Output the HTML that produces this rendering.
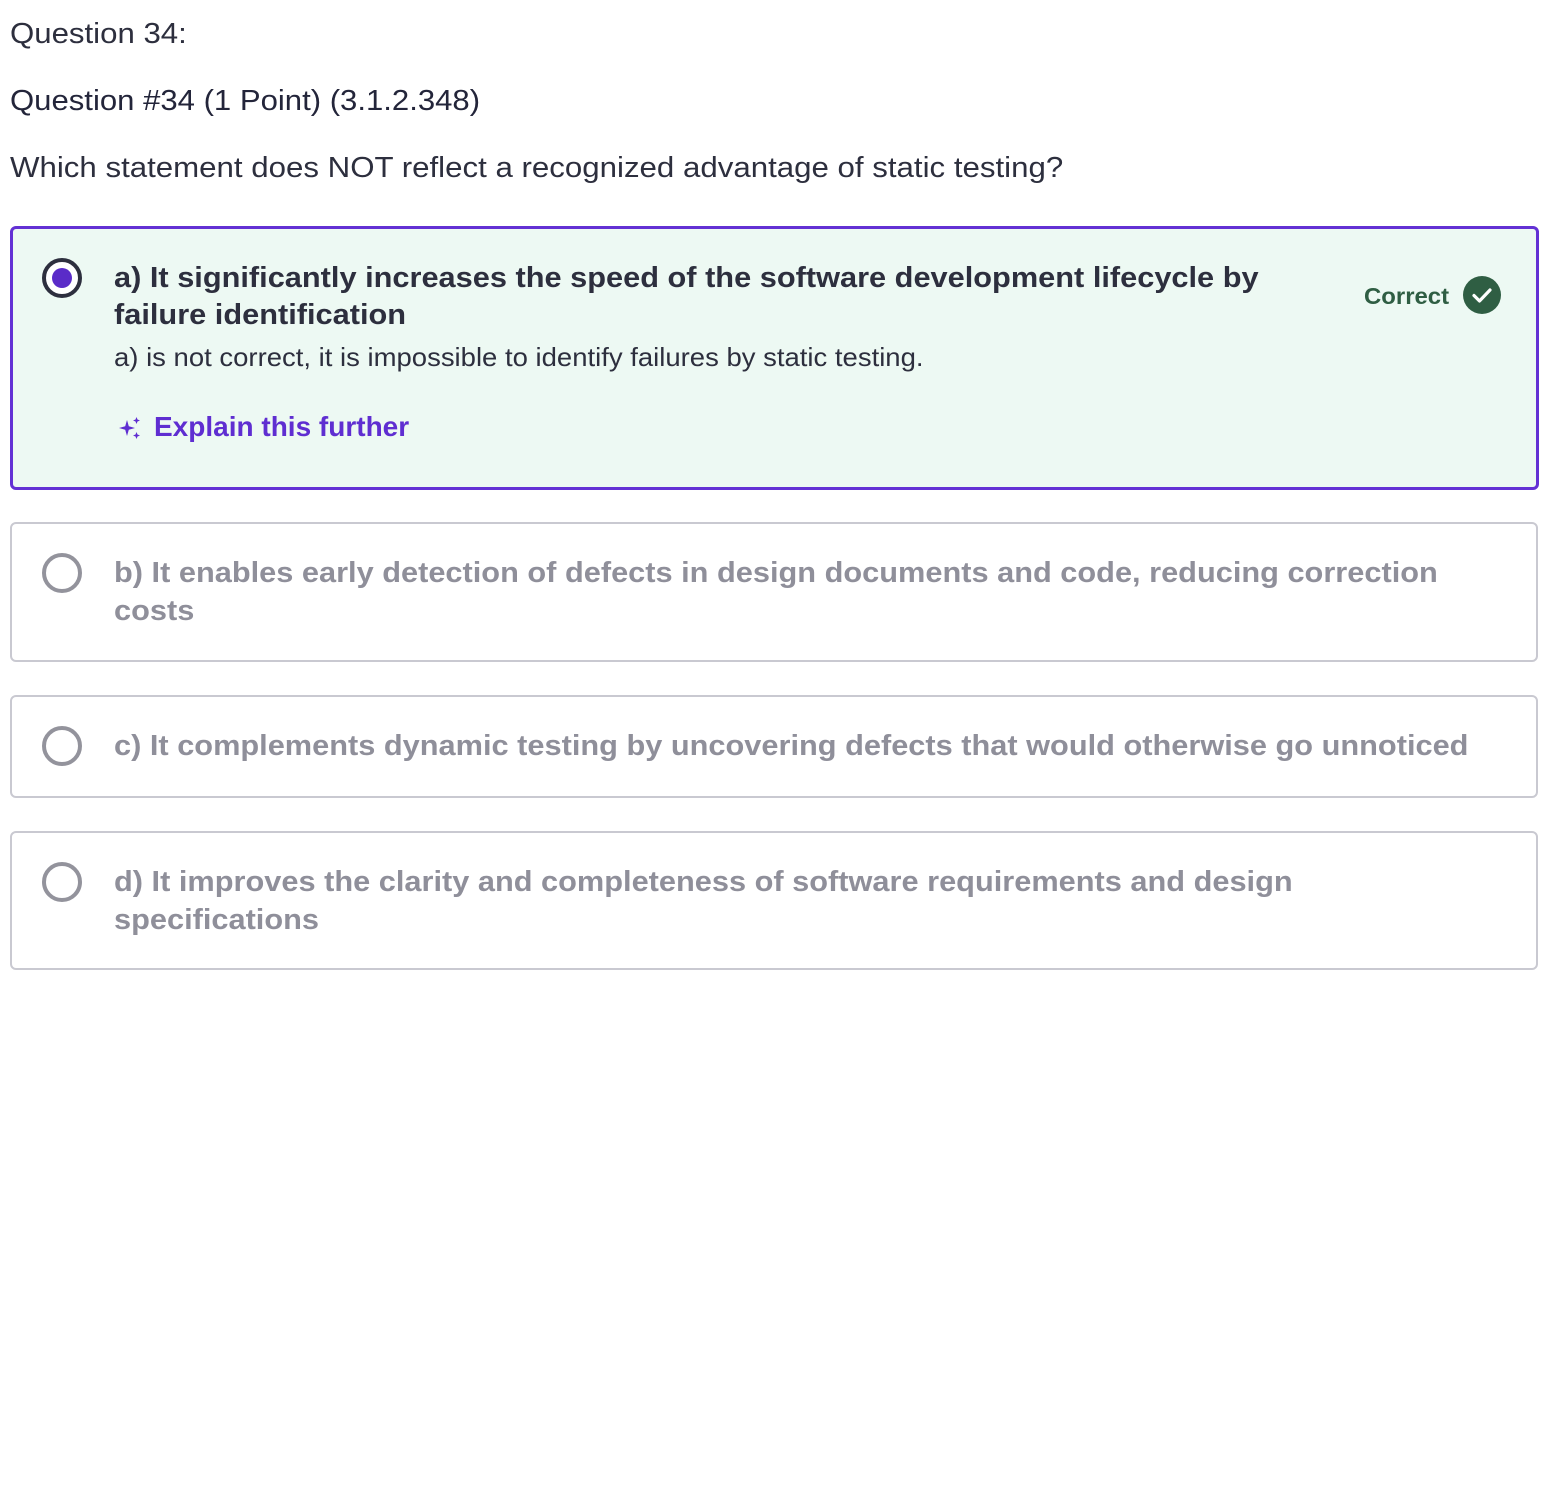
<!DOCTYPE html>
<html><head><meta charset="utf-8"><style>
html,body{margin:0;padding:0;background:#fff;width:1552px;height:1486px;overflow:hidden}
body{position:relative;font-family:"Liberation Sans",sans-serif;color:#2d2f3e}
.t{position:absolute;white-space:nowrap;line-height:38px}
.reg{font-size:29px;font-weight:normal}
.s{display:inline-block;transform-origin:0 50%}
.b{font-size:29px;font-weight:bold;transform-origin:0 50%;display:inline-block;transform:scaleX(1.06)}
.box{position:absolute;left:10px;width:1528px;border:2px solid #c9c9d1;border-radius:6px;box-sizing:border-box;background:#fff}
.gray{color:#8f8f9a}
.rad{position:absolute;left:42px;width:40px;height:40px;border-radius:50%;box-sizing:border-box;border:4px solid #93939c}
</style></head><body>
<div class="t reg" style="left:10px;top:15px;"><span class="s" style="transform:scaleX(1.075)">Question 34:</span></div>
<div class="t reg" style="left:10px;top:82px;color:#23253a"><span class="s" style="transform:scaleX(1.072)">Question #34 (1 Point) (3.1.2.348)</span></div>
<div class="t reg" style="left:10px;top:149px;"><span class="s" style="transform:scaleX(1.077)">Which statement does NOT reflect a recognized advantage of static testing?</span></div>

<div class="box" style="top:226px;height:264px;border:3px solid #6331d4;background:#edf9f3;width:1529px"></div>
<div style="position:absolute;left:42px;top:258px;width:40px;height:40px;border-radius:50%;box-sizing:border-box;border:4px solid #2d2f3e;background:#fff"></div>
<div style="position:absolute;left:52px;top:268px;width:20px;height:20px;border-radius:50%;background:#5a2bc8"></div>
<div class="t" style="left:114px;top:259px"><span class="b">a) It significantly increases the speed of the software development lifecycle by</span></div>
<div class="t" style="left:114px;top:296px"><span class="b">failure identification</span></div>
<div class="t" style="left:114px;top:338px;font-size:26px"><span class="s" style="transform:scaleX(1.057)">a) is not correct, it is impossible to identify failures by static testing.</span></div>
<svg style="position:absolute;left:118px;top:416px" width="24" height="24" viewBox="0 0 24 24">
<path fill="#5f2ed1" d="M9 4 L10.8 10.2 L17 12 L10.8 13.8 L9 20 L7.2 13.8 L1 12 L7.2 10.2 Z"/>
<path fill="#5f2ed1" d="M18.5 1 L19.5 3.5 L22 4.5 L19.5 5.5 L18.5 8 L17.5 5.5 L15 4.5 L17.5 3.5 Z"/>
<path fill="#5f2ed1" d="M18.5 16 L19.5 18.5 L22 19.5 L19.5 20.5 L18.5 23 L17.5 20.5 L15 19.5 L17.5 18.5 Z"/>
</svg>
<div class="t" style="left:154px;top:408px;color:#5f2ed1"><span class="b" style="font-size:28px;transform:scaleX(1.0)">Explain this further</span></div>
<div class="t" style="left:1364px;top:277px;color:#2f5e43"><span class="b" style="font-size:23px;transform:scaleX(1.04)">Correct</span></div>
<svg style="position:absolute;left:1463px;top:276px" width="38" height="38" viewBox="0 0 38 38"><circle cx="19" cy="19" r="19" fill="#2f5e43"/><path d="M11 19.5 L16.5 25 L27 14" fill="none" stroke="#fff" stroke-width="3.2" stroke-linecap="round" stroke-linejoin="round"/></svg>

<div class="box" style="top:522px;height:140px"></div>
<div class="rad" style="top:553px"></div>
<div class="t gray" style="left:114px;top:554px"><span class="b">b) It enables early detection of defects in design documents and code, reducing correction</span></div>
<div class="t gray" style="left:114px;top:592px"><span class="b">costs</span></div>

<div class="box" style="top:695px;height:103px"></div>
<div class="rad" style="top:726px"></div>
<div class="t gray" style="left:114px;top:727px"><span class="b">c) It complements dynamic testing by uncovering defects that would otherwise go unnoticed</span></div>

<div class="box" style="top:831px;height:139px"></div>
<div class="rad" style="top:862px"></div>
<div class="t gray" style="left:114px;top:863px"><span class="b">d) It improves the clarity and completeness of software requirements and design</span></div>
<div class="t gray" style="left:114px;top:901px"><span class="b">specifications</span></div>
</body></html>
